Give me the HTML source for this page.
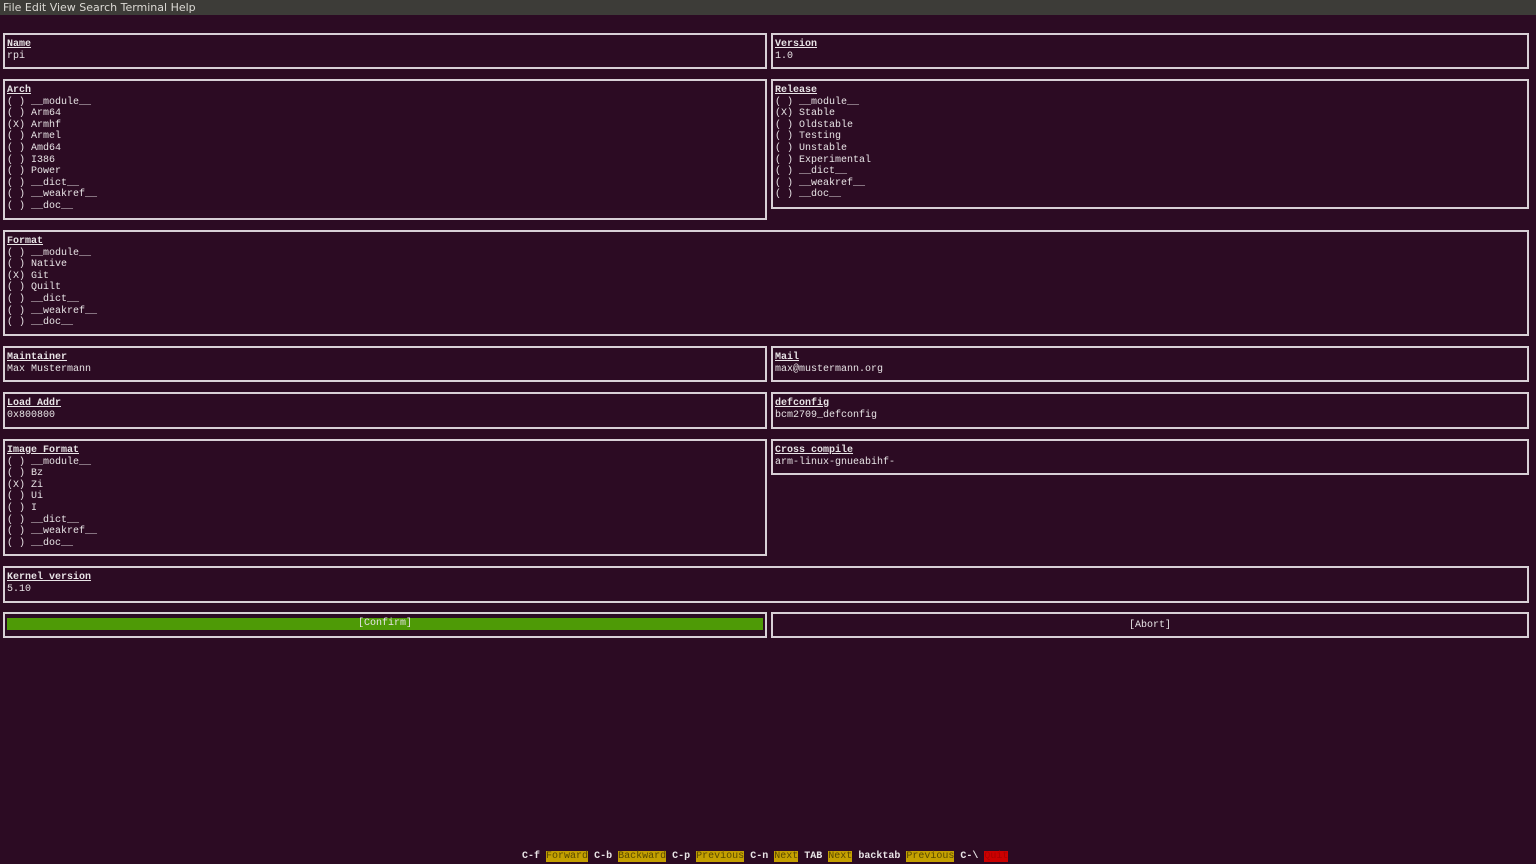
<!DOCTYPE html>
<html><head><meta charset="utf-8"><style>
body{margin:0;width:1536px;height:864px;background:#2c0b23;overflow:hidden;position:relative;font-family:"Liberation Mono",monospace;font-size:10px;color:#e8e4e6}
#menu{position:absolute;left:0;top:0;width:1536px;height:15px;background:#3d3c38;color:#dcdad5;font-family:"DejaVu Sans","Liberation Sans",sans-serif;font-size:11px;line-height:15px;padding-left:3px;box-sizing:border-box}
.b{position:absolute;border:2px solid #d8d0d6;box-sizing:border-box;padding:4px 0 0 2px;line-height:11.6px;white-space:pre}
.t{font-weight:bold;text-decoration:underline}
.btn{position:absolute;border:2px solid #d8d0d6;box-sizing:border-box;line-height:11.6px;text-align:center}
#st{position:absolute;top:851px;left:522px;white-space:pre;line-height:12px}
.y{background:#c4a000;color:#5a4a00}.r{background:#cc0000;color:#a00}.k{font-weight:bold}
</style></head><body>
<div id="menu">File Edit View Search Terminal Help</div>
<div class="b" style="left:3px;top:33px;width:764px;height:36px"><span class="t">Name</span>
rpi</div>
<div class="b" style="left:771px;top:33px;width:758px;height:36px"><span class="t">Version</span>
1.0</div>
<div class="b" style="left:3px;top:79px;width:764px;height:141px"><span class="t">Arch</span>
( ) __module__
( ) Arm64
(X) Armhf
( ) Armel
( ) Amd64
( ) I386
( ) Power
( ) __dict__
( ) __weakref__
( ) __doc__</div>
<div class="b" style="left:771px;top:79px;width:758px;height:130px"><span class="t">Release</span>
( ) __module__
(X) Stable
( ) Oldstable
( ) Testing
( ) Unstable
( ) Experimental
( ) __dict__
( ) __weakref__
( ) __doc__</div>
<div class="b" style="left:3px;top:230px;width:1526px;height:106px"><span class="t">Format</span>
( ) __module__
( ) Native
(X) Git
( ) Quilt
( ) __dict__
( ) __weakref__
( ) __doc__</div>
<div class="b" style="left:3px;top:346px;width:764px;height:36px"><span class="t">Maintainer</span>
Max Mustermann</div>
<div class="b" style="left:771px;top:346px;width:758px;height:36px"><span class="t">Mail</span>
max@mustermann.org</div>
<div class="b" style="left:3px;top:392px;width:764px;height:37px"><span class="t">Load Addr</span>
0x800800</div>
<div class="b" style="left:771px;top:392px;width:758px;height:37px"><span class="t">defconfig</span>
bcm2709_defconfig</div>
<div class="b" style="left:3px;top:439px;width:764px;height:117px"><span class="t">Image Format</span>
( ) __module__
( ) Bz
(X) Zi
( ) Ui
( ) I
( ) __dict__
( ) __weakref__
( ) __doc__</div>
<div class="b" style="left:771px;top:439px;width:758px;height:36px"><span class="t">Cross compile</span>
arm-linux-gnueabihf-</div>
<div class="b" style="left:3px;top:566px;width:1526px;height:37px"><span class="t">Kernel version</span>
5.10</div>
<div class="btn" style="left:3px;top:612px;width:764px;height:26px;padding:4px 2px 0 2px"><div style="background:#4e9a06;height:12px;line-height:12px">[Confirm]</div></div>
<div class="btn" style="left:771px;top:612px;width:758px;height:26px;padding-top:6px">[Abort]</div>
<div id="st"><span class="k">C-f</span> <span class="y">Forward</span> <span class="k">C-b</span> <span class="y">Backward</span> <span class="k">C-p</span> <span class="y">Previous</span> <span class="k">C-n</span> <span class="y">Next</span> <span class="k">TAB</span> <span class="y">Next</span> <span class="k">backtab</span> <span class="y">Previous</span> <span class="k">C-\</span> <span class="r">Quit</span></div>
</body></html>
